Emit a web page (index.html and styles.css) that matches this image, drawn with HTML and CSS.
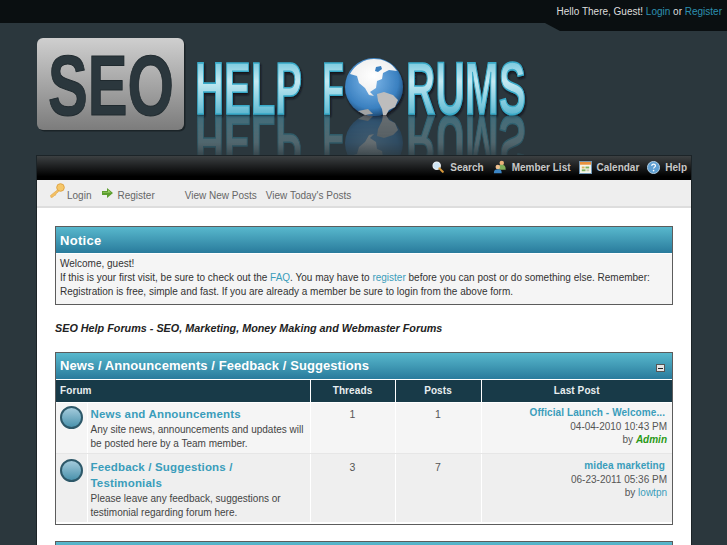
FILE: index.html
```html
<!DOCTYPE html>
<html lang="en">
<head>
<meta charset="utf-8">
<title>SEO Help Forums</title>
<link rel="stylesheet" href="styles.css">
</head>
<body>
<div class="topbar">
  <div class="welcome">Hello There, Guest! <a href="#">Login</a> or <a href="#">Register</a></div>
</div>
<header class="logo-row">
<svg class="logo" width="500" height="132" viewBox="0 0 500 132" xmlns="http://www.w3.org/2000/svg" role="img" aria-label="SEO Help Forums">
  <defs>
    <linearGradient id="plate" x1="0" y1="0" x2="0" y2="1">
      <stop offset="0" stop-color="#cfcfcf"/><stop offset="1" stop-color="#7c7c7c"/>
    </linearGradient>
    <linearGradient id="chrome" x1="0" y1="0" x2="0" y2="1">
      <stop offset="0" stop-color="#3fb0ce"/><stop offset=".42" stop-color="#c4e9f2"/><stop offset=".7" stop-color="#7cc8dc"/><stop offset="1" stop-color="#2b98b8"/>
    </linearGradient>
    <radialGradient id="sea" cx=".45" cy=".4" r=".65">
      <stop offset="0" stop-color="#7fb8ea"/><stop offset=".72" stop-color="#3a80c0"/><stop offset="1" stop-color="#173f66"/>
    </radialGradient>
    <radialGradient id="land" cx=".5" cy=".45" r=".7">
      <stop offset="0" stop-color="#ffffff"/><stop offset=".7" stop-color="#f0f0f0"/><stop offset="1" stop-color="#a8a8a8"/>
    </radialGradient>
    <linearGradient id="fade" x1="0" y1="0" x2="0" y2="1">
      <stop offset="0" stop-color="#fff" stop-opacity=".42"/><stop offset=".7" stop-color="#fff" stop-opacity=".28"/><stop offset="1" stop-color="#fff" stop-opacity=".1"/>
    </linearGradient>
    <mask id="fademask" maskUnits="userSpaceOnUse" x="0" y="91" width="500" height="41">
      <rect x="0" y="91" width="500" height="41" fill="url(#fade)"/>
    </mask>
    <filter id="drop" x="-10%" y="-10%" width="120%" height="125%">
      <feDropShadow dx="1" dy="2" stdDeviation="1.2" flood-color="#0b1114" flood-opacity=".9"/>
    </filter>
    <g id="word">
      <text class="chrome-text" x="159" y="91" textLength="107" lengthAdjust="spacingAndGlyphs">HELP</text>
      <text class="chrome-text" x="286" y="91" textLength="22" lengthAdjust="spacingAndGlyphs">F</text>
      <text class="chrome-text" x="370" y="91" textLength="120" lengthAdjust="spacingAndGlyphs">RUMS</text>
      <g>
        <circle cx="338" cy="64" r="29" fill="url(#sea)"/>
        <path fill="url(#land)" d="M314 51c5-9 14-15 24-15 9 0 17 3 23 12l-8-1-6 3-1 6-5 2-1 7-6 4 4 4-5-1-4-7-6-5-2-7z"/>
        <path fill="#3a80c0" d="M340 44l5-1 1 3-4 3-3-1z"/>
        <path fill="#bdbdbd" d="M341 71l7-2 9 3 5 5-3 7-6 3-3 5-3 0-1-6-4-8z"/>
        <path fill="#a3a3a3" d="M322 88l10-2 5 5-8 1z"/>
      </g>
    </g>
  </defs>
  <rect x="1" y="15" width="147" height="92" rx="6" fill="#10181b" opacity=".6" transform="translate(1.5 1.5)"/>
  <rect x="1" y="15" width="147" height="92" rx="6" fill="url(#plate)"/>
  <text class="seo-text" x="12" y="92" textLength="126" lengthAdjust="spacingAndGlyphs">SEO</text>
  <use href="#word" filter="url(#drop)"/>
  <g mask="url(#fademask)">
    <use href="#word" transform="matrix(1 0 0 -1 0 184)"/>
  </g>
</svg>
</header>
<div class="wrapper">
  <nav class="menu">
    <a class="m-search" href="#"><svg width="12" height="14" viewBox="0 0 14 14"><circle cx="5.500" cy="5.500" r="4.200" fill="#cfe6f5" stroke="#e8eef2" stroke-width="1.500"/><path d="M8.600 8.600l4 4" stroke="#d99a3c" stroke-width="2.400" stroke-linecap="round"/></svg>Search</a>
    <a href="#"><svg width="14" height="16" viewBox="0 0 16 16"><circle cx="10" cy="3.400" r="2.600" fill="#eab27a"/><path d="M6 11c0-4 1-5.500 4-5.500s4.500 1.500 4.500 5.500z" fill="#7fae5a"/><circle cx="5.500" cy="8" r="2.600" fill="#f0c090"/><path d="M1 15c0-3.500 1.500-4.500 4.500-4.500S10 11.500 10 15z" fill="#3d86c6"/></svg>Member List</a>
    <a href="#"><svg width="13" height="13" viewBox="0 0 14 14"><rect x=".5" y=".5" width="13" height="13" fill="#f4f4ea" stroke="#6d97ba"/><rect x="1" y="1" width="12" height="3" fill="#e9913d"/><rect x="3" y="6" width="3" height="2" fill="#d8b25c"/><rect x="7" y="6" width="4" height="2" fill="#7eb05e"/><rect x="3" y="9" width="4" height="2" fill="#7eb05e"/><rect x="8" y="9" width="3" height="2" fill="#c9c9b0"/></svg>Calendar</a>
    <a href="#"><svg width="13" height="13" viewBox="0 0 14 14"><circle cx="7" cy="7" r="6.500" fill="#5f9fd2" stroke="#b9d5ea"/><path d="M5 5.300c.2-1.400 1.100-2 2.100-2 1.200 0 2 .8 2 1.800 0 1.500-2 1.500-2 3.100" fill="none" stroke="#fff" stroke-width="1.300"/><circle cx="7.100" cy="10.300" r=".9" fill="#fff"/></svg>Help</a>
  </nav>
  <div class="subnav">
    <a class="sub-login" href="#"><svg width="16" height="16" viewBox="0 0 16 16"><circle cx="11.500" cy="4.500" r="3.800" fill="#f5c76a" stroke="#e0a545"/><path d="M9 6.500L1.500 12.500l.5 2 2-.5 1-1.500 1.500-.3.500-1.500 2.500-2z" fill="#f3c064" stroke="#e0a545" stroke-width=".6"/></svg>Login</a>
    <a class="sub-register" href="#"><svg width="11" height="10" viewBox="0 0 11 10"><path d="M0 3h5V0l6 5-6 5V7H0z" fill="#5d9e2f"/><path d="M1 4h5V2l3 2.500L6 4.500H1z" fill="#a5d46e"/></svg>Register</a>
    <a class="sub-new" href="#">View New Posts</a>
    <a class="sub-today" href="#">View Today's Posts</a>
  </div>
  <main class="content">
    <section class="box notice">
      <h2 class="box-title">Notice</h2>
      <div class="notice-body">Welcome, guest!<br>If this is your first visit, be sure to check out the <a href="#">FAQ</a>. You may have to <a href="#">register</a> before you can post or do something else. Remember: Registration is free, simple and fast. If you are already a member be sure to login from the above form.</div>
    </section>
    <p class="tagline">SEO Help Forums - SEO, Marketing, Money Making and Webmaster Forums</p>
    <section class="box">
      <h2 class="box-title large"><span><a href="#">News</a> / <a href="#">Announcements</a> / <a href="#">Feedback</a> / <a href="#">Suggestions</a></span><span class="collapse"></span></h2>
      <table class="forums">
        <colgroup><col class="c-icon"><col class="c-forum"><col class="c-num"><col class="c-num2"><col class="c-last"></colgroup>
        <thead>
          <tr class="head"><th colspan="2" class="left">Forum</th><th>Threads</th><th>Posts</th><th>Last Post</th></tr>
        </thead>
        <tbody>
          <tr class="row1">
            <td class="status"><span class="dot"></span></td>
            <td class="info"><a class="fname" href="#">News and Announcements</a><div class="desc">Any site news, announcements and updates will be posted here by a Team member.</div></td>
            <td class="num">1</td><td class="num">1</td>
            <td class="last"><a class="lp" href="#">Official Launch - Welcome...</a><div>04-04-2010 10:43 PM</div><div>by <a class="admin" href="#">Admin</a></div></td>
          </tr>
          <tr class="row2">
            <td class="status"><span class="dot"></span></td>
            <td class="info"><a class="fname" href="#">Feedback / Suggestions / Testimonials</a><div class="desc">Please leave any feedback, suggestions or testimonial regarding forum here.</div></td>
            <td class="num">3</td><td class="num">7</td>
            <td class="last"><a class="lp lp2" href="#">midea marketing</a><div>06-23-2011 05:36 PM</div><div>by <a class="user" href="#">lowtpn</a></div></td>
          </tr>
        </tbody>
      </table>
    </section>
    <section class="box next">
      <h2 class="box-title large">&nbsp;</h2>
    </section>
  </main>
</div>
</body>
</html>
```
FILE: styles.css
```css
html { overflow: hidden; height: 545px; }
body {
  margin: 0;
  height: 545px;
  overflow: hidden;
  background: #2b373d;
  font-family: "Liberation Sans", Arial, sans-serif;
  font-size: 10px;
  color: #333;
}
a { text-decoration: none; color: #3a9dbb; }

.topbar {
  height: 23px;
  background: #0a0f11;
  display: flex;
  justify-content: flex-end;
}
.welcome {
  height: 31px;
  box-sizing: border-box;
  padding: 5px 5px 0 5px;
  margin-left: auto;
  width: 182px;
  text-align: right;
  background: #0a0f11;
  color: #ddd;
  font-size: 10px;
  line-height: 13px;
  white-space: nowrap;
  clip-path: polygon(0 0, 100% 0, 100% 100%, 15px 100%, 0 23px);
  position: relative;
}
.welcome a { color: #2d8fb0; }

.logo-row { height: 132px; padding-left: 36px; }
.logo { display: block; }
.seo-text {
  font: bold 86px "Liberation Sans", sans-serif;
  fill: #2b373d;
  stroke: #1f292e;
  stroke-width: 1;
}
.chrome-text {
  font: bold 75px "Liberation Sans", sans-serif;
  fill: url(#chrome);
  stroke: #38aac9;
  stroke-width: 1.6;
}

.wrapper {
  margin: 0 35px 0 36px;
  background: #fff;
  border-left: 1px solid #1c2428;
  border-right: 1px solid #1c2428;
  height: 500px;
}
.menu {
  height: 25px;
  margin: 0 -1px;
  box-sizing: border-box;
  padding: 0 4px 2px 0;
  background: linear-gradient(#3c4042, #000 85%);
  border: 1px solid #1c2428;
  border-bottom: 0;
  display: flex;
  justify-content: flex-end;
  align-items: center;
  gap: 8px;
}
.menu a {
  display: flex;
  align-items: center;
  gap: 5px;
  color: #c8c8c8;
  font-weight: bold;
  font-size: 10px;
}
.menu .m-search { gap: 6px; margin-right: 1px; }
.subnav {
  height: 22px;
  padding: 4px 0 0 12px;
  background: #eee;
  border-bottom: 2px solid #ddd;
  display: flex;
  align-items: center;
  color: #666;
  font-size: 10px;
}
.subnav a { color: #666; display: flex; align-items: center; }
.sub-login svg { margin: -9px 2px 0 0; }
.sub-register { margin-left: 11px; }
.sub-register svg { margin: -5px 4px 0 0; }
.sub-new { margin-left: 30px; }
.sub-today { margin-left: 9px; }

.content { padding: 18px 18px 0; }
.box {
  border: 1px solid #5c5c5c;
  background: #fff;
  padding: 0;
}
.box-title {
  margin: 0 0 1px;
  height: 26px;
  padding: 0 4px;
  display: flex;
  align-items: center;
  justify-content: space-between;
  background: linear-gradient(#58b8cd, #297b9c);
  color: #fff;
  font-size: 13px;
  font-weight: bold;
  letter-spacing: .3px;
}
.box-title a { color: #fff; }
.box-title.large { box-sizing: border-box; padding-bottom: 2px; letter-spacing: .07px; }
.collapse {
  width: 9px;
  height: 8px;
  margin: 5px 3px 0 0;
  background: #e4e4e4;
  border: 1px solid #555;
  box-sizing: border-box;
  position: relative;
}
.collapse::after {
  content: "";
  position: absolute;
  left: 1px;
  right: 1px;
  top: 3px;
  height: 1px;
  background: #222;
}
.notice-body {
  padding: 3px 4px 5px;
  background: #f5f5f5;
  line-height: 14px;
  font-size: 10px;
  height: 42px;
}
.notice-body a { color: #3a9dbb; }
.tagline {
  margin: 17px 0 17px;
  font-weight: bold;
  font-style: italic;
  font-size: 10.8px;
  line-height: 13px;
  color: #222;
}
.forums {
  width: 100%;
  table-layout: fixed;
  border-collapse: collapse;
}
.c-icon { width: 31px; }
.c-num { width: 85px; }
.c-num2 { width: 86px; }
.c-last { width: 191px; }
.forums th, .forums td { border: 1px solid #fff; padding: 0; }
.forums tr > :first-child { border-left: 0; }
.forums tr > :last-child { border-right: 0; }
.head th {
  height: 21px;
  padding-bottom: 1px;
  border-top: 0;
  background: #183a48;
  color: #e8eef0;
  font-size: 10px;
  font-weight: bold;
  letter-spacing: .1px;
  text-align: center;
}
.head th.left { text-align: left; padding-left: 4px; }
.row1 { height: 51px; }
.row2 { height: 69px; }
.row1 td { background: #f5f5f5; vertical-align: top; border-bottom-color: #e6e6e6; }
.row2 td { background: #efefef; vertical-align: top; border-bottom: 2px solid #fff; }
.status { text-align: left; }
.dot {
  display: block;
  width: 23px;
  height: 23px;
  margin: 3px 0 0 4px;
  box-sizing: border-box;
  border: 2px solid #2d5869;
  border-radius: 50%;
  background: linear-gradient(#a4cbdc, #4a92ac);
}
.row2 .dot { margin-top: 5px; }
.forums .info { padding: 3px 4px 0 3px; line-height: 14px; font-size: 10px; }
.forums .row2 .info { padding-top: 5px; }
.fname { color: #3a9dbb; font-weight: bold; font-size: 11.5px; line-height: 16px; letter-spacing: .17px; display: block; }
.desc { margin-top: 1px; color: #444; }
.forums .num { text-align: center; font-size: 10.5px; padding-top: 4px; line-height: 14px; color: #555; }
.forums .row2 .num { padding-top: 6px; }
.forums .last { text-align: right; padding: 3px 5px 0 0; line-height: 13.5px; font-size: 10px; color: #555; }
.forums .row2 .last { padding-top: 5px; }
.lp { color: #3a9dbb; font-weight: bold; font-size: 10px; letter-spacing: .08px; padding-right: 2px; }
.admin { color: #2a9a16; font-weight: bold; font-style: italic; }
.user { color: #3a9dbb; }
.next { margin-top: 16px; }
```
